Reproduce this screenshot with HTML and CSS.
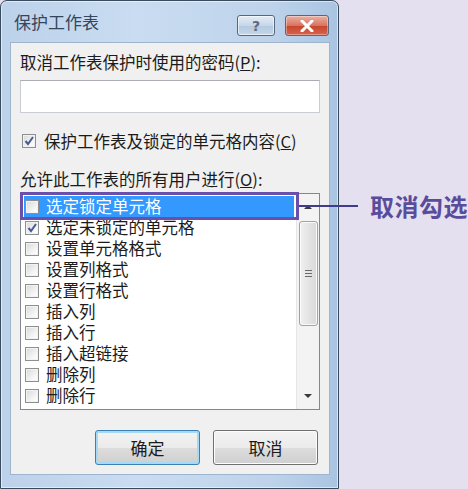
FILE: index.html
```html
<!DOCTYPE html>
<html lang="zh-CN">
<head>
    <meta charset="UTF-8">
    <meta name="viewport" content="width=device-width, initial-scale=1.0">
    <title>保护工作表</title>
    <link rel="stylesheet" href="styles.css">
</head>
<body>
    <div class="window">
        <div class="titlebar">
            <span class="title">保护工作表</span>
            <div class="caption-buttons">
                <button class="cap-btn help">?</button>
                <button class="cap-btn close">
                    <svg width="14" height="12" viewBox="0 0 14 12"><path d="M2 1 L12 11 M12 1 L2 11" stroke="#fff" stroke-width="3" stroke-linecap="round"/></svg>
                </button>
            </div>
        </div>

        <div class="client">
            <div class="label">取消工作表保护时使用的密码(<u>P</u>):</div>
            <input class="password" type="password">

            <div class="check-row">
                <span class="box checked"><svg width="12" height="12" viewBox="0 0 12 12"><path d="M2.5 6 L5 9 L10 2" fill="none" stroke="#465b93" stroke-width="2"/></svg></span>
                <span>保护工作表及锁定的单元格内容(<u>C</u>)</span>
            </div>

            <div class="label spaced">允许此工作表的所有用户进行(<u>O</u>):</div>

            <div class="list">
                <ul class="items">
                    <li class="selected"><span class="box"></span><span>选定锁定单元格</span></li>
                    <li><span class="box checked"><svg width="12" height="12" viewBox="0 0 12 12"><path d="M2.5 6 L5 9 L10 2" fill="none" stroke="#465b93" stroke-width="2"/></svg></span><span>选定未锁定的单元格</span></li>
                    <li><span class="box"></span><span>设置单元格格式</span></li>
                    <li><span class="box"></span><span>设置列格式</span></li>
                    <li><span class="box"></span><span>设置行格式</span></li>
                    <li><span class="box"></span><span>插入列</span></li>
                    <li><span class="box"></span><span>插入行</span></li>
                    <li><span class="box"></span><span>插入超链接</span></li>
                    <li><span class="box"></span><span>删除列</span></li>
                    <li><span class="box"></span><span>删除行</span></li>
                </ul>
                <div class="scrollbar">
                    <div class="arrow up"></div>
                    <div class="thumb"><span></span><span></span><span></span></div>
                    <div class="arrow down"></div>
                </div>
                <!-- annotation frame around the first row -->
                <div class="mark"></div>
            </div>

            <div class="actions">
                <button class="btn default">确定</button>
                <button class="btn">取消</button>
            </div>
        </div>
    </div>

    <div class="callout">
        <span class="callout-line"></span>
        <span class="callout-text">取消勾选</span>
    </div>
</body>
</html>
```

FILE: styles.css
```css
body {
    margin: 0;
    width: 468px;
    height: 489px;
    overflow: hidden;
    background: #e4e0ef;
    font-family: "Noto Sans CJK SC", "Noto Sans", sans-serif;
    position: relative;
}
.window {
    width: 339px;
    height: 489px;
    box-sizing: border-box;
    border: 1px solid #3a4b5e;
    border-radius: 7px 7px 0 0;
    background: linear-gradient(to right, #bcd2ea 0%, #c9dcf1 40%, #bed3eb 80%, #a9c4e2 100%);
    box-shadow: inset 0 0 0 1px rgba(255, 255, 255, 0.55);
    padding: 0 8px 13px 9px;
}
.titlebar {
    height: 41px;
    display: flex;
    align-items: flex-start;
    justify-content: space-between;
}
.title {
    margin: 11px 0 0 4px;
    font-size: 17px;
    line-height: 20px;
    color: #34465e;
}
.caption-buttons {
    display: flex;
    gap: 10px;
    margin-top: 14px;
    margin-right: 1px;
}
.cap-btn {
    height: 21px;
    border: 1px solid #56677e;
    border-radius: 3px;
    padding: 0;
    display: flex;
    align-items: center;
    justify-content: center;
}
.help {
    width: 38px;
    background: linear-gradient(#e3ecf6, #c6d7ea 50%, #b4c9e0 51%, #c4d6ea);
    color: #5c6a7c;
    font-family: "DejaVu Sans", sans-serif;
    font-weight: bold;
    font-size: 14px;
    box-shadow: inset 0 0 0 1px rgba(255, 255, 255, 0.6);
}
.close {
    width: 44px;
    background: linear-gradient(#eab0a4, #d9745f 50%, #c6442b 51%, #d5654c);
    box-shadow: inset 0 0 0 1px rgba(255, 255, 255, 0.35);
}
.client {
    height: 433px;
    box-sizing: border-box;
    background: #f0f0f0;
    border: 1px solid #9fb5cd;
    padding: 9px 9px 0 9px;
    display: flex;
    flex-direction: column;
    font-size: 16.5px;
    color: #1b1b1b;
}
.label {
    line-height: 20px;
}
.label.spaced {
    margin-top: 18px;
}
.password {
    margin-top: 8px;
    height: 33px;
    width: 300px;
    box-sizing: border-box;
    border: 1px solid #c9ccd2;
    border-top-color: #abadb3;
    background: #fff;
}
.check-row {
    margin-top: 18px;
    line-height: 20px;
    display: flex;
    align-items: center;
    gap: 8px;
}
.box {
    width: 14px;
    height: 14px;
    flex: none;
    box-sizing: border-box;
    border: 1px solid #8e8f8f;
    background: linear-gradient(135deg, #d8d8d8, #f7f7f7 70%, #ffffff);
    box-shadow: inset 0 0 0 1px #f2f2f2;
    display: flex;
    align-items: center;
    justify-content: center;
}
.check-row .box {
    margin-left: 2px;
}
.list {
    position: relative;
    margin-top: 4px;
    width: 300px;
    height: 217px;
    box-sizing: border-box;
    border: 1px solid #828790;
    background: #fff;
    display: flex;
}
.items {
    list-style: none;
    margin: 0;
    padding: 2px 0 0 3px;
    flex: 1;
}
.items li {
    height: 21px;
    display: flex;
    align-items: center;
    gap: 7px;
    padding-left: 1px;
    line-height: 21px;
}
.items li.selected {
    background: #3399ff;
    color: #fff;
    margin-right: 2px;
}
.scrollbar {
    width: 22px;
    flex: none;
    background: #f3f3f3;
    border-left: 1px solid #e6e6e6;
    display: flex;
    flex-direction: column;
    align-items: center;
}
.arrow {
    width: 0;
    height: 0;
    border-left: 4px solid transparent;
    border-right: 4px solid transparent;
}
.arrow.up {
    margin-top: 11px;
    border-bottom: 4px solid #3a3a3a;
}
.arrow.down {
    margin-top: auto;
    margin-bottom: 11px;
    border-top: 4px solid #3a3a3a;
}
.thumb {
    margin-top: 12px;
    width: 19px;
    height: 105px;
    box-sizing: border-box;
    border: 1px solid #a3a3a3;
    border-radius: 3px;
    background: linear-gradient(to right, #f0f0f0, #e4e4e4 50%, #d8d8d8);
    box-shadow: inset 0 0 0 1px #fafafa;
    display: flex;
    flex-direction: column;
    align-items: center;
    justify-content: center;
    gap: 2px;
}
.thumb span {
    width: 7px;
    height: 1px;
    background: #6b6b6b;
}
.mark {
    position: absolute;
    left: -1px;
    top: -2px;
    width: 279px;
    height: 28px;
    box-sizing: border-box;
    border: 3px solid #6a50aa;
}
.actions {
    margin-top: 20px;
    display: flex;
    justify-content: flex-end;
    gap: 13px;
    padding-right: 2px;
}
.btn {
    width: 105px;
    height: 35px;
    border: 1px solid #707070;
    border-radius: 3px;
    background: linear-gradient(#f3f3f3, #ebebeb 50%, #dddddd 51%, #cfcfcf);
    box-shadow: inset 0 0 0 1px #fcfcfc;
    font-family: "Noto Sans CJK SC", sans-serif;
    font-size: 17px;
    color: #1b1b1b;
    padding: 0;
}
.btn.default {
    border-color: #3c7fb1;
    box-shadow: inset 0 0 0 2px #a5d9f4;
}
.callout {
    position: absolute;
    left: 299px;
    top: 192px;
    height: 28px;
    display: flex;
    align-items: center;
    gap: 12px;
}
.callout-line {
    width: 59px;
    height: 2px;
    background: #3f3b8d;
}
.callout-text {
    font-size: 24px;
    letter-spacing: 0.5px;
    font-weight: bold;
    color: #5a4c9c;
    white-space: nowrap;
    line-height: 28px;
}
```
